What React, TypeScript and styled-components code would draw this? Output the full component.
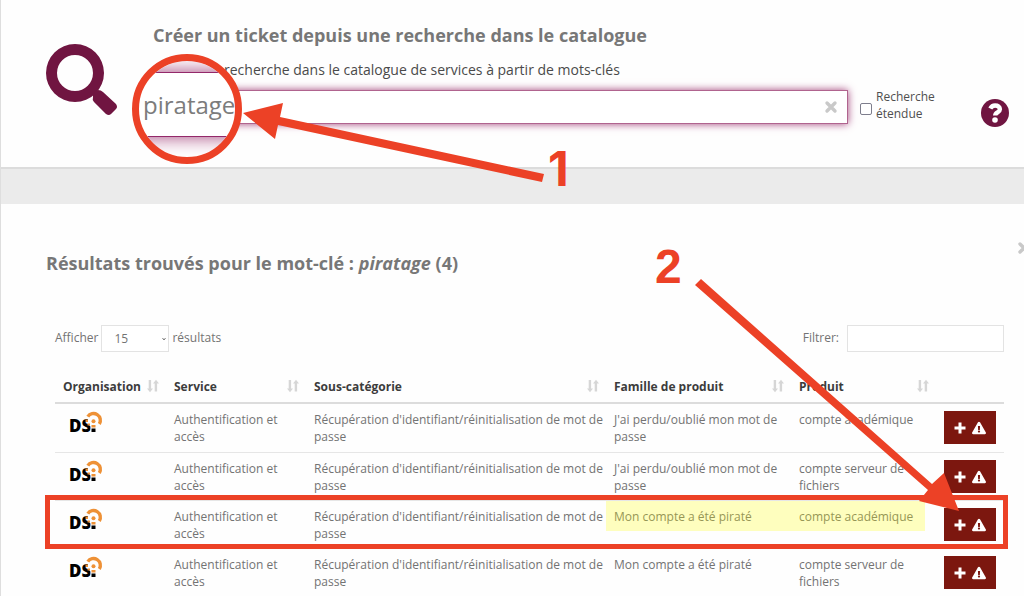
import React from "react";
import styled, { createGlobalStyle } from "styled-components";
import { FaExclamationTriangle } from "react-icons/fa";

const GlobalStyle = createGlobalStyle`
  * { box-sizing: border-box; }
  html { scrollbar-width: none; }
  body {
    margin: 0;
    background: #ebebeb;
    color: #737373;
    font-family: "Open Sans", sans-serif;
    font-size: 12px;
    line-height: 17px;
  }
  button, input, select { font: inherit; color: inherit; }
`;

const Page = styled.div`
  position: relative;
  overflow: hidden;
  border-left: 1px solid #dedede;
`;

const Panel = styled.section`
  background: #fefefe;
`;

const SearchPanel = styled(Panel)`
  display: flex;
  align-items: flex-start;
  padding: 23px 15px 43px 45px;
  border-bottom: 2px solid #dcdcdc;
  margin-bottom: 35px;
`;

const SearchGlyph = styled.svg`
  flex: none;
  width: 72px;
  height: 72px;
  margin: 21px 35px 0 0;
  fill: #701541;
`;

const SearchBody = styled.form`
  flex: 1;
`;

const Title = styled.h2`
  margin: 0;
  font-size: 18px;
  line-height: 24px;
  font-weight: 700;
  color: #777;
`;

const Hint = styled.label`
  display: block;
  margin: 13px 0 10px;
  padding-left: 71px;
  font-size: 14px;
  line-height: 20px;
  color: #4a4a4a;
`;

const SearchLine = styled.div`
  display: flex;
  align-items: center;
  height: 34px;
`;

const Field = styled.div`
  display: flex;
  align-items: center;
  flex: 1;
  height: 34px;
  padding-right: 9px;
  background: #fff;
  border: 1px solid #b0648f;
  box-shadow: 0 0 8px #a3427a;
`;

const FieldInput = styled.input`
  flex: 1;
  min-width: 0;
  height: 100%;
  padding: 0 10px;
  border: 0;
  outline: 0;
  background: transparent;
`;

const IconButton = styled.button`
  display: flex;
  flex: none;
  align-self: center;
  padding: 0;
  border: 0;
  background: none;
`;

const Extended = styled.label`
  display: flex;
  align-items: center;
  gap: 4px;
  width: 88px;
  margin: 0 0 4px 12px;
  color: #4f4f4f;
`;

const Tick = styled.input`
  appearance: none;
  flex: none;
  width: 12px;
  height: 12px;
  margin: 8px 0 0;
  border: 1px solid #7d7d8c;
  border-radius: 2px;
  background: #fff;
`;

const Help = styled(IconButton)`
  margin: 11px 0 0 33px;
`;

const ResultsPanel = styled(Panel)`
  padding: 47px 20px 8px 45px;
`;

const ResultsHead = styled.header`
  display: flex;
  justify-content: space-between;
  margin-right: -27px;
`;

const CloseButton = styled(IconButton)`
  align-self: flex-start;
  margin-top: -10px;
`;

const Tools = styled.div`
  display: flex;
  justify-content: space-between;
  margin: 50px 0 0 9px;
`;

const ToolLabel = styled.label`
  display: flex;
  align-items: flex-start;
  gap: 3px;
  line-height: 25px;
`;

const FilterLabel = styled(ToolLabel)`
  gap: 8px;
`;

const SelectBox = styled.span`
  display: flex;
  align-items: center;
  width: 68px;
  height: 27px;
  padding-right: 2px;
  border: 1px solid #e3e3e3;
  background: #fff;
`;

const CountSelect = styled.select`
  appearance: none;
  flex: 1;
  min-width: 0;
  padding: 0 0 0 12px;
  border: 0;
  outline: 0;
  background: none;
`;

const FilterInput = styled.input`
  width: 157px;
  height: 27px;
  padding: 0 8px;
  border: 1px solid #e3e3e3;
  background: #fff;
`;

const TableArea = styled.div`
  position: relative;
  margin: 18px 0 0 9px;
`;

const Table = styled.table`
  width: 100%;
  table-layout: fixed;
  border-collapse: separate;
  border-spacing: 0;
`;

const Th = styled.th<{ $width?: number }>`
  width: ${(p) => (p.$width ? `${p.$width}px` : "auto")};
  height: 34px;
  padding: 0 7px 0 8px;
  border-bottom: 2px solid #dcdcdc;
  text-align: left;
  color: #3c3c3c;
`;

const ThInner = styled.span`
  display: flex;
  align-items: center;
  justify-content: space-between;
  white-space: nowrap;
`;

const Td = styled.td`
  height: 48px;
  padding: 7px 2px 6px 8px;
  vertical-align: top;
  tr + tr > & {
    border-top: 1px solid #e6e6e6;
  }
`;

const AddButton = styled.button`
  display: flex;
  align-items: center;
  justify-content: center;
  gap: 6px;
  width: 52px;
  height: 33px;
  padding: 0;
  border: 0;
  background: #7c170f;
  color: #fff;
`;

const Logo = styled.svg`
  display: block;
  width: 34px;
  height: 24px;
  margin-left: 6px;
  overflow: visible;
`;

const LogoText = styled.text`
  font: 800 17px "Open Sans", sans-serif;
  fill: #000;
`;

const Marker = styled.div`
  position: absolute;
  top: 131px;
  left: 551px;
  width: 319px;
  height: 30px;
  background: rgba(255, 255, 0, 0.25);
`;

const Frame = styled.div`
  position: absolute;
  top: 125px;
  left: -10px;
  right: -4px;
  height: 54px;
  border: 5px solid #ec4126;
`;

const Lens = styled.div`
  position: absolute;
  top: 54px;
  left: 131px;
  width: 110px;
  height: 110px;
  padding-top: 11px;
  border: 7px solid #ec4126;
  border-radius: 50%;
  background: #fff;
  overflow: hidden;
`;

const LensField = styled.span`
  display: block;
  height: 65px;
  margin: 0 -8px;
  padding-left: 11px;
  border: 1px solid #93286a;
  box-shadow: 0 0 18px #a3427a;
  font-size: 24px;
  line-height: 64px;
  color: #7c7c7c;
`;

const Arrows = styled.svg`
  position: absolute;
  top: 0;
  left: -1px;
  width: 1024px;
  height: 596px;
  pointer-events: none;
  fill: #ec4126;
`;

const Step = styled.span<{ $x: number; $y: number; $family: string }>`
  position: absolute;
  left: ${(p) => p.$x}px;
  top: ${(p) => p.$y}px;
  font: 700 48px/48px ${(p) => p.$family}, sans-serif;
  color: #ec4126;
`;

const CrossIcon = () => (
  <svg width="14" height="14" viewBox="0 0 14 14" stroke="#c9c9c9" strokeWidth="3.4" strokeLinecap="round" aria-hidden="true">
    <path d="M3 3l8 8M11 3l-8 8" />
  </svg>
);

const PlusIcon = () => (
  <svg width="12" height="12" viewBox="0 0 12 12" stroke="#fff" strokeWidth="3" aria-hidden="true">
    <path d="M6 .5v11M.5 6h11" />
  </svg>
);

const HelpIcon = () => (
  <svg width="28" height="28" viewBox="0 0 28 28" fill="none" aria-hidden="true">
    <circle cx="14" cy="14" r="14" fill="#701541" />
    <path d="M9.300 9.600C10.500 7.200 12.300 6.500 14.100 6.500c2.900 0 4.800 1.400 4.800 3.700 0 3.400-4.700 3-4.700 6.400" stroke="#fff" strokeWidth="4.400" />
    <circle cx="14" cy="21" r="2.800" fill="#fff" />
  </svg>
);

const SortIcon = () => (
  <svg width="12" height="14" viewBox="0 0 12 14" fill="#d6d6d6" aria-hidden="true">
    <path d="M1.700 1h2.400v8.500H6L3 13.200 0 9.500h1.700z" />
    <path d="M7.700 12.500h2.400V4.500H12L9 .8 6 4.500h1.700z" />
  </svg>
);

const DsiLogo = () => (
  <Logo viewBox="0 0 34 24" role="img" aria-label="DSI">
    <LogoText x="0" y="21">DS</LogoText>
    <circle cx="24" cy="10" r="5.500" fill="#fefefe" />
    <path d="M21.500 12h6v10h-6z" fill="#fefefe" />
    <path d="M22.500 17.500h4V21h-4z" />
    <path d="M22.500 14h4v2.500h-4z" fill="#ee9136" />
    <path d="M18.800 5.700A6.800 6.800 0 0 1 30.300 13" fill="none" stroke="#ee9136" strokeWidth="3.400" />
    <circle cx="24.500" cy="10.200" r="2" fill="#ee9136" />
    <path d="M16.500 8.500h2.500v2.500h-2.500zM18.500 12.500h2.500v2h-2.500z" fill="#ee9136" />
  </Logo>
);

const columns: { name: string; width?: number }[] = [
  { name: "Organisation", width: 111 },
  { name: "Service", width: 140 },
  { name: "Sous-catégorie" },
  { name: "Famille de produit", width: 185 },
  { name: "Produit", width: 145 },
];

const rows = [
  ["J'ai perdu/oublié mon mot de passe", "compte académique"],
  ["J'ai perdu/oublié mon mot de passe", "compte serveur de fichiers"],
  ["Mon compte a été piraté", "compte académique"],
  ["Mon compte a été piraté", "compte serveur de fichiers"],
];

export default function App() {
  return (
    <>
      <GlobalStyle />
      <Page>
        <SearchPanel>
          <SearchGlyph viewBox="0 0 72 72" aria-hidden="true">
            <path
              fillRule="evenodd"
              d="M29 0a29 29 0 1 1 0 58a29 29 0 1 1 0-58zm0 11a18 18 0 1 0 0 36a18 18 0 1 0 0-36z"
            />
            <path d="M47 48l5-2q3 0 5 2l13 12q2 3 0 5l-5 5q-2 2-5 0l-12-12q-2-2-1-5z" />
          </SearchGlyph>
          <SearchBody onSubmit={(e) => e.preventDefault()}>
            <Title>Créer un ticket depuis une recherche dans le catalogue</Title>
            <Hint htmlFor="keyword">recherche dans le catalogue de services à partir de mots-clés</Hint>
            <SearchLine>
              <Field>
                <FieldInput id="keyword" type="text" />
                <IconButton type="button" aria-label="Effacer">
                  <CrossIcon />
                </IconButton>
              </Field>
              <Extended>
                <Tick type="checkbox" />
                Recherche étendue
              </Extended>
              <Help type="button" aria-label="Aide">
                <HelpIcon />
              </Help>
            </SearchLine>
          </SearchBody>
        </SearchPanel>

        <ResultsPanel>
          <ResultsHead>
            <Title>
              Résultats trouvés pour le mot-clé : <em>piratage</em> (4)
            </Title>
            <CloseButton type="button" aria-label="Fermer">
              <CrossIcon />
            </CloseButton>
          </ResultsHead>
          <Tools>
            <ToolLabel>
              Afficher
              <SelectBox>
                <CountSelect defaultValue="15">
                  <option>15</option>
                </CountSelect>
                <svg width="4" height="4" viewBox="0 0 4 4" fill="none" stroke="#777" aria-hidden="true">
                  <path d="M.5 1L2 3 3.500 1" />
                </svg>
              </SelectBox>
              résultats
            </ToolLabel>
            <FilterLabel>
              Filtrer:
              <FilterInput type="text" />
            </FilterLabel>
          </Tools>
          <TableArea>
            <Table>
              <thead>
                <tr>
                  {columns.map((c) => (
                    <Th key={c.name} $width={c.width}>
                      <ThInner>
                        {c.name}
                        <SortIcon />
                      </ThInner>
                    </Th>
                  ))}
                  <Th $width={68} />
                </tr>
              </thead>
              <tbody>
                {rows.map(([family, product], i) => (
                  <tr key={i}>
                    <Td>
                      <DsiLogo />
                    </Td>
                    <Td>Authentification et accès</Td>
                    <Td>Récupération d'identifiant/réinitialisation de mot de passe</Td>
                    <Td>{family}</Td>
                    <Td>{product}</Td>
                    <Td>
                      <AddButton type="button" aria-label="Créer un ticket">
                        <PlusIcon />
                        <FaExclamationTriangle size={14} />
                      </AddButton>
                    </Td>
                  </tr>
                ))}
              </tbody>
            </Table>
            <Marker />
            <Frame />
          </TableArea>
        </ResultsPanel>

        <Lens>
          <LensField>piratage</LensField>
        </Lens>
        <Arrows viewBox="0 0 1024 596" aria-hidden="true">
          <path d="M243 113L283 103 280 117 544 174 542 182 278 125 275 139z" />
          <path d="M701 279L932 484 944 473 959 511 919 501 928 490 695 285z" />
        </Arrows>
        <Step $x={547} $y={145} $family="Inter">1</Step>
        <Step $x={654} $y={243} $family="'Liberation Sans'">2</Step>
      </Page>
    </>
  );
}
